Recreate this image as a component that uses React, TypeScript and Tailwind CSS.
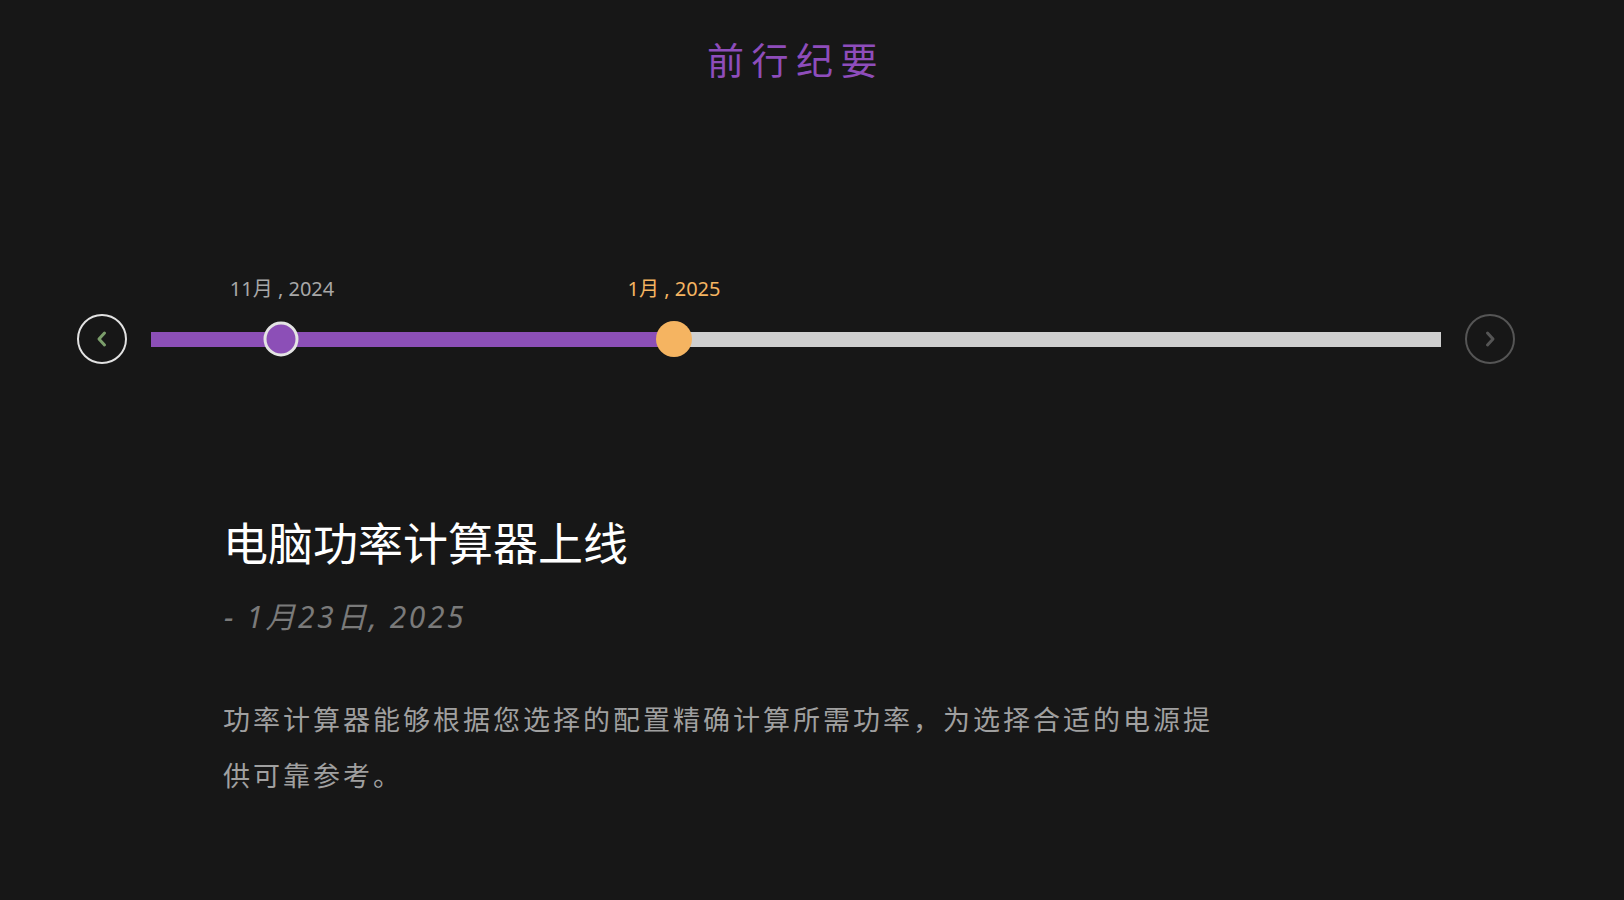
import React from "react";

const cjk = '"Noto Sans CJK SC", "Noto Sans", sans-serif';
const latin = '"Noto Sans", "Noto Sans CJK SC", sans-serif';

export default function App() {
  const trackWidth = 1290;
  const knob1 = 130;
  const knob2 = 523;
  return (
    <div className="min-h-[900px] w-full bg-[#171717] overflow-hidden" style={{ fontFamily: cjk }}>
      <div className="ml-[77px] w-[1438px] flex flex-col">
        <div className="pt-[35px] text-center">
          <h1 className="text-[37px] leading-[48px] tracking-[7.5px] text-[#8e4dbb] font-normal">前行纪要</h1>
        </div>

        <div className="mt-[231px] flex items-center gap-[24px]">
          <button className="w-[50px] h-[50px] rounded-full border-[2.5px] border-[#e2e2e2] flex items-center justify-center shrink-0">
            <svg width="14" height="18" viewBox="0 0 14 18">
              <polyline points="9.5,3 4,9 9.5,15" fill="none" stroke="#7b9e6b" strokeWidth="3" strokeLinecap="round" strokeLinejoin="round" />
            </svg>
          </button>
          <div className="relative h-[15px] bg-[#cfcfcf] shrink-0" style={{ width: trackWidth }}>
            <div className="absolute left-0 top-0 h-full bg-[#8c4fb7]" style={{ width: knob2 }} />
            <div className="absolute top-1/2 -translate-x-1/2 -translate-y-1/2 w-[35px] h-[35px] rounded-full bg-[#8c4fb7] border-[3px] border-[#e4e4e4]" style={{ left: knob1 }} />
            <div className="absolute top-1/2 -translate-x-1/2 -translate-y-1/2 w-[36px] h-[36px] rounded-full bg-[#f5b461]" style={{ left: knob2 }} />
            <div className="absolute -translate-x-1/2 top-[-56px] whitespace-nowrap text-[20px] leading-[26px] text-[#a8a8a8]" style={{ left: knob1 + 1, fontFamily: latin }}>11月 , 2024</div>
            <div className="absolute -translate-x-1/2 top-[-56px] whitespace-nowrap text-[20px] leading-[26px] text-[#f5b461]" style={{ left: knob2, fontFamily: latin }}>1月 , 2025</div>
          </div>
          <button className="w-[50px] h-[50px] rounded-full border-[2.5px] border-[#555555] flex items-center justify-center shrink-0">
            <svg width="14" height="18" viewBox="0 0 14 18">
              <polyline points="4.5,3 10,9 4.5,15" fill="none" stroke="#555555" strokeWidth="3" strokeLinecap="round" strokeLinejoin="round" />
            </svg>
          </button>
        </div>

        <div className="mt-[150px] pl-[146px] w-[1151px] flex flex-col">
          <h2 className="text-[45px] leading-[56px] text-white font-normal">电脑功率计算器上线</h2>
          <div className="mt-[27px] pl-[1px] text-[30px] leading-[40px] italic tracking-[2.6px] text-[#7a7a7a]" style={{ fontFamily: latin }}>- 1月23日, 2025</div>
          <p className="mt-[54px] text-[27px] leading-[56px] tracking-[3px] text-[#a0a0a0]">
            功率计算器能够根据您选择的配置精确计算所需功率，为选择合适的电源提供可靠参考。
          </p>
        </div>
      </div>
    </div>
  );
}
